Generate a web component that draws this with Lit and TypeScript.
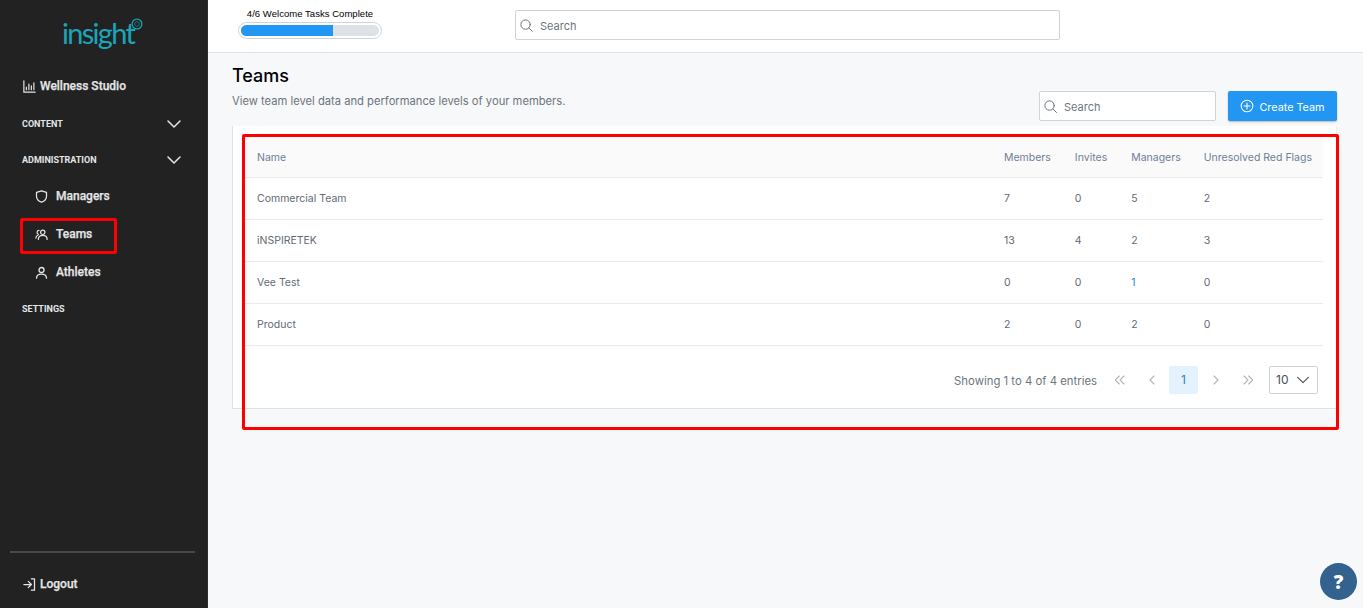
import { LitElement, html, css, svg } from "lit";
import { customElement } from "lit/decorators.js";

const ic = (body: unknown, size = 16, sw = 1.6) => html`<svg class="ic" width=${size} height=${size} viewBox="0 0 24 24" fill="none" stroke="currentColor" stroke-width=${sw} stroke-linecap="round" stroke-linejoin="round">${body}</svg>`;
const search = ic(svg`<circle cx="10.5" cy="10.5" r="7.5"/><path d="M16 16l5.5 5.5"/>`, 15, 1.6);
const chev = ic(svg`<path d="M4 8l8 8 8-8"/>`, 18, 2);

const rows = [
  ["Commercial Team", "7", "0", "5", "2"],
  ["iNSPIRETEK", "13", "4", "2", "3"],
  ["Vee Test", "0", "0", "1", "0"],
  ["Product", "2", "0", "2", "0"],
];

@customElement("app-root")
export class AppRoot extends LitElement {
  static styles = css`
    :host { display: block; width: 1363px; height: 608px; position: relative; overflow: hidden; background: #f7f8fa; font-family: Inter, "Liberation Sans", sans-serif; color: #6c757d; }
    .app { display: flex; height: 608px; }
    .ic { display: block; flex: none; }
    .side { width: 208px; flex: none; background: #222222; color: #e4e6e8; font-family: Roboto, sans-serif; display: flex; flex-direction: column; font-weight: 700; box-sizing: border-box; border-right: 1px solid #2e2e2e; }
    .logo { height: 52px; padding: 15px 0 0 62px; box-sizing: border-box; display: flex; align-items: flex-start; color: #1ba5b8; font: 400 29px/36px Lato, sans-serif; letter-spacing: -1.7px; }
    .logo svg { margin: 3px 0 0 -3px; }
    .nav { padding: 23px 22px 0; display: flex; flex-direction: column; }
    .item { display: flex; align-items: center; gap: 3px; height: 22px; font-size: 12px; font-weight: 500; -webkit-text-stroke: 0.25px; }
    .sec { display: flex; align-items: center; justify-content: space-between; font-size: 9px; height: 14px; margin-top: 22px; padding-right: 2px; }
    .sec.first { margin-top: 20px; }
    .sec.last { margin-top: 19px; }
    .sub { display: flex; align-items: center; gap: 7px; height: 22px; padding-left: 12px; font-size: 12px; font-weight: 500; -webkit-text-stroke: 0.25px; margin-top: 16px; }
    .subs { display: flex; flex-direction: column; margin-top: 2px; }
    .foot { margin-top: auto; margin-left: 10px; margin-right: 12px; border-top: 2px solid #484848; height: 57px; box-sizing: border-box; display: flex; align-items: flex-start; padding: 21px 0 0 12px; }
    .foot .item { height: 20px; }

    .main { flex: 1; min-width: 0; display: flex; flex-direction: column; }
    .top { height: 53px; flex: none; box-sizing: border-box; background: #fff; border-bottom: 1px solid #dee2e6; display: flex; align-items: flex-start; }
    .prog { margin-left: 30px; width: 144px; flex: none; padding-top: 7px; }
    .prog-t { font: 9.5px/13px "Liberation Sans", Arial, sans-serif; color: #000; text-align: center; letter-spacing: .04px; }
    .bar { height: 17px; border: 1px solid #ced4da; border-radius: 9px; box-sizing: border-box; padding: 2px; background: #fff; margin-top: 2px; }
    .track { height: 11px; border-radius: 6px; background: #dee2e6; overflow: hidden; }
    .fill { height: 100%; background: #2196f3; }
    .inp { display: flex; align-items: center; gap: 6px; box-sizing: border-box; border: 1px solid #ced4da; border-radius: 2px; background: #fff; color: #6c757d; font-size: 11px; padding-left: 3px; }
    .inp span { padding-top: 1px; }
    .top .inp { width: 545px; height: 30px; margin: 10px 0 0 133px; }
    .body { padding: 12px 26px 0 24px; }
    h1 { margin: 0; font-size: 18px; line-height: 22px; font-weight: 500; color: #000; font-family: Inter, sans-serif; }
    .lead { font-size: 11.2px; line-height: 16px; margin-top: 6px; color: #6c757d; }
    .tools { display: flex; justify-content: flex-end; gap: 12px; margin-top: -18px; }
    .tools .inp { width: 177px; height: 30px; }
    .btn { width: 109px; height: 30px; box-sizing: border-box; border-radius: 2px; background: #2196f3; color: #fff; display: flex; align-items: center; justify-content: center; gap: 5px; font-size: 10.8px; box-shadow: 0 1px 2px rgba(0,0,0,.25); }
    .btn span { padding-top: 2px; }
    .card { background: #fff; border: 1px solid #dee2e6; border-top: 0; border-right-color: #edf0f2; margin-top: 5px; height: 283px; box-sizing: border-box; padding: 10px 13px 0 12px; }
    table { width: 100%; border-collapse: collapse; font-size: 10.5px; }
    th { font-weight: 400; text-align: left; background: #fafafa; height: 39px; padding: 2px 12px 0; white-space: nowrap; color: #6f8097; border-bottom: 1px solid #e9ecef; }
    td { height: 41px; padding: 0 12px; white-space: nowrap; color: #626a74; border-bottom: 1px solid #e9ecef; }
    th:nth-child(4), td:nth-child(4), th:nth-child(5), td:nth-child(5) { padding-right: 11px; }
    .wide { width: 100%; }
    td.blue { color: #2f86c9; }
    .pager { display: flex; align-items: center; justify-content: flex-end; height: 63px; padding-top: 4px; box-sizing: border-box; padding-right: 5px; font-size: 11.35px; color: #6c757d; }
    .info { margin-right: 5px; margin-top: 2px; }
    .pg { width: 29px; height: 28px; margin-left: 3px; display: flex; align-items: center; justify-content: center; color: #adb5bd; border-radius: 2px; }
    .pg.on { background: #e3f2fd; color: #2f7fbf; font-size: 12px; }
    .size { margin-left: 7px; width: 49px; height: 28px; box-sizing: border-box; border: 1px solid #ced4da; border-radius: 2px; display: flex; align-items: center; justify-content: space-between; padding: 0 6px; color: #495057; font-size: 12px; }
    .help { position: absolute; left: 1320px; top: 563px; width: 37px; height: 37px; border-radius: 50%; background: #32628d; color: #fff; display: flex; align-items: center; justify-content: center; font: 900 19px "Open Sans", sans-serif; }
    .mark { position: absolute; border: 3px solid #f00; border-radius: 2px; box-sizing: border-box; pointer-events: none; }
    .m1 { left: 20px; top: 218px; width: 97px; height: 36px; }
    .m2 { left: 242px; top: 134px; width: 1097px; height: 296px; }
  `;

  render() {
    const shield = ic(svg`<path d="M12 3l8 2.5v6c0 5-3.5 8-8 9.5-4.500-1.500-8-4.500-8-9.500v-6z"/>`, 15, 2);
    const team = ic(svg`<circle cx="14" cy="8.500" r="3.500"/><path d="M7 20c0-4 3-6.500 7-6.500s7 2.500 7 6.500"/><path d="M8 5.500a3.200 3.200 0 0 0-1 6.200M3 18c0-3 1.300-4.500 3.500-5.300"/>`, 15, 1.9);
    const person = ic(svg`<circle cx="12" cy="8" r="4"/><path d="M4 21c0-4.500 3.500-6.500 8-6.500s8 2 8 6.500"/>`, 15, 2.1);
    const bars = ic(svg`<path d="M3 3v18h18M7 17v-4M11 17V8M15 17v-6M19 17V6"/>`, 15, 1.9);
    const logout = ic(svg`<path d="M3 12h12M10 7l5 5-5 5M15 3h5v18h-5"/>`, 15, 2);
    const plus = ic(svg`<circle cx="12" cy="12" r="10"/><path d="M12 7v10M7 12h10"/>`, 14, 1.8);
    const p = (d: string) => ic(svg`<path d=${d}/>`, 16, 1.6);
    return html`
      <div class="app">
        <aside class="side">
          <div class="logo">insight<svg width="12" height="12" viewBox="0 0 13 13" fill="none" stroke="#1ba5b8"><circle cx="6.500" cy="6.500" r="5.300" stroke-width="1.300"/><circle cx="6.500" cy="6.500" r="2.500" stroke-width="1" stroke="#147a8a"/></svg></div>
          <nav class="nav">
            <div class="item">${bars}Wellness Studio</div>
            <div class="sec first">CONTENT ${chev}</div>
            <div class="sec">ADMINISTRATION ${chev}</div>
            <div class="subs">
              <div class="sub">${shield}Managers</div>
              <div class="sub">${team}Teams</div>
              <div class="sub">${person}Athletes</div>
            </div>
            <div class="sec last">SETTINGS</div>
          </nav>
          <div class="foot"><div class="item">${logout}Logout</div></div>
        </aside>
        <div class="main">
          <header class="top">
            <div class="prog">
              <div class="prog-t">4/6 Welcome Tasks Complete</div>
              <div class="bar"><div class="track"><div class="fill" style="width:${(4 / 6) * 100}%"></div></div></div>
            </div>
            <div class="inp">${search}<span>Search</span></div>
          </header>
          <main class="body">
            <h1>Teams</h1>
            <div class="lead">View team level data and performance levels of your members.</div>
            <div class="tools">
              <div class="inp">${search}<span>Search</span></div>
              <div class="btn">${plus}<span>Create Team</span></div>
            </div>
            <div class="card">
              <table>
                <thead><tr><th class="wide">Name</th><th>Members</th><th>Invites</th><th>Managers</th><th>Unresolved Red Flags</th></tr></thead>
                <tbody>
                  ${rows.map((r) => html`<tr><td>${r[0]}</td><td>${r[1]}</td><td>${r[2]}</td><td class=${r[3] === "1" ? "blue" : ""}>${r[3]}</td><td>${r[4]}</td></tr>`)}
                </tbody>
              </table>
              <div class="pager">
                <span class="info">Showing 1 to 4 of 4 entries</span>
                <div class="pg">${p("M11 6l-6 6 6 6M18 6l-6 6 6 6")}</div>
                <div class="pg">${p("M15 6l-6 6 6 6")}</div>
                <div class="pg on">1</div>
                <div class="pg">${p("M9 6l6 6-6 6")}</div>
                <div class="pg">${p("M6 6l6 6-6 6M13 6l6 6-6 6")}</div>
                <div class="size"><span>10</span>${ic(svg`<path d="M4 8l8 8 8-8"/>`, 16, 1.6)}</div>
              </div>
            </div>
          </main>
        </div>
      </div>
      <div class="help">?</div>
      <div class="mark m1"></div>
      <div class="mark m2"></div>
    `;
  }
}
